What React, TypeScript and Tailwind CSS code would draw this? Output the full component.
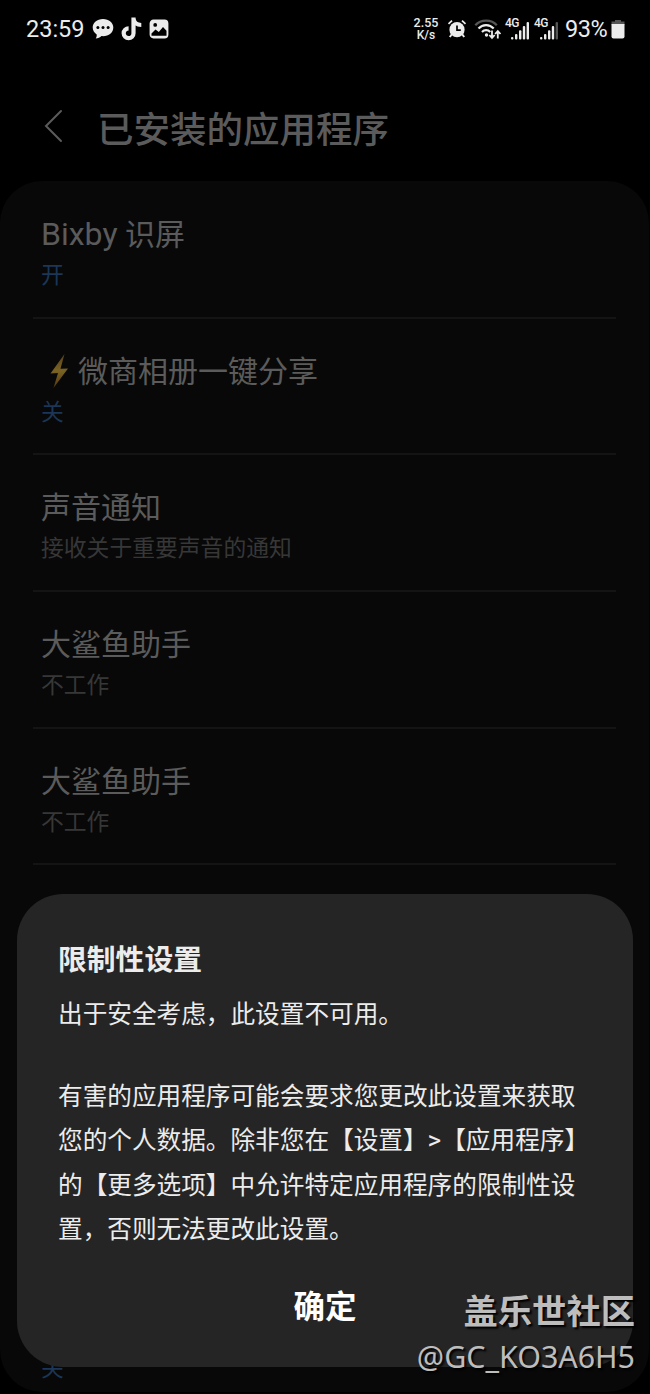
type Row = {
  title: string;
  sub: string;
  tone: "blue" | "gray";
  bolt?: boolean;
};

const rows: Row[] = [
  { title: "Bixby 识屏", sub: "开", tone: "blue" },
  { title: "微商相册一键分享", sub: "关", tone: "blue", bolt: true },
  { title: "声音通知", sub: "接收关于重要声音的通知", tone: "gray" },
  { title: "大鲨鱼助手", sub: "不工作", tone: "gray" },
  { title: "大鲨鱼助手", sub: "不工作", tone: "gray" },
];

function Signal({ weak }: { weak?: boolean }) {
  return (
    <div className="relative h-6 w-[24px]">
      <span className="absolute left-[-1px] top-0 text-[12px] font-medium leading-none tracking-[-0.5px]">4G</span>
      <svg viewBox="0 0 24 24" className="h-6 w-6" fill="#ececec">
        <rect x="5" y="20" width="2.4" height="2.5" rx="1" />
        <rect x="9" y="17" width="2.4" height="5.5" rx="1" />
        <rect x="13" y="13.2" width="2.4" height="9.3" rx="1" />
        <rect x="16.8" y="9" width="2.4" height="13.5" rx="1" />
        <rect x="20.6" y="5" width="2.4" height="17.5" rx="1" fill={weak ? "#555" : "#ececec"} />
      </svg>
    </div>
  );
}

function StatusBar() {
  return (
    <header className="flex h-[58px] items-center pl-[26px] pr-[25px] text-[#ececec]">
      <span className="w-[66px] pt-[2px] text-[23.5px] leading-none">23:59</span>

      {/* Notification icons */}
      <svg viewBox="0 0 22 22" className="h-[22px] w-[22px]">
        <path
          d="M11 1C5 1 .7 4.7.7 9.6c0 3 1.6 5.3 4 6.8.2 1.8-.3 3.1-1 4.2 2.3-.3 4.3-1.1 5.8-2.5.5.1 1 .1 1.5.1 6 0 10.3-3.7 10.3-8.6S17 1 11 1Z"
          fill="#ececec"
        />
        <circle cx="5.9" cy="9.6" r="1.5" fill="#000" />
        <circle cx="11" cy="9.6" r="1.5" fill="#000" />
        <circle cx="16.1" cy="9.6" r="1.5" fill="#000" />
      </svg>
      <svg viewBox="0 0 24 26" className="ml-[6px] h-[26px] w-[24px]">
        <path
          d="M13.5 1.5v15.8a4.9 4.9 0 1 1-4.9-4.9M13.5 2.5c.3 4 3.3 6.500 7.800 6.500"
          fill="none"
          stroke="#ececec"
          strokeWidth="4.2"
        />
      </svg>
      <svg viewBox="0 0 20 20" className="ml-[5px] h-5 w-5">
        <rect x="1.3" y="1.3" width="17.4" height="17.4" rx="3.2" fill="#ececec" stroke="#ececec" strokeWidth="1.4" />
        <path d="M2.5 14.5 6.5 10.5l3.3 2.5 4.2-5 3.5 3.8v5H2.5Z" fill="#000" />
        <circle cx="6.2" cy="5.9" r="1.9" fill="#000" />
      </svg>

      {/* System icons */}
      <div className="ml-auto flex items-center">
        <div className="w-[26px] text-center text-[12.5px] font-medium leading-none">
          <div className="h-3 leading-3">2.55</div>
          <div className="h-3 text-[12px] leading-3">K/s</div>
        </div>
        <svg viewBox="0 0 20 20" className="ml-[8px] h-5 w-5" fill="none">
          <path d="M1.5 4.8 5 1.7M18.5 4.8 15 1.7" stroke="#ececec" strokeWidth="1.8" />
          <circle cx="10" cy="10.7" r="7.6" fill="#ececec" />
          <path d="m5 15-2.2 3M15 15l2.2 3" stroke="#ececec" strokeWidth="2" />
          <path d="M10 6.5v4.7h3.8" stroke="#000" strokeWidth="1.7" />
        </svg>
        <svg viewBox="0 0 28 24" className="ml-[7px] h-6 w-7" fill="none" strokeWidth="2.2">
          <path d="M1.3 8.2C6.8 2 17.5 2 22.8 8.2" stroke="#555" />
          <path d="M4.5 11.5c4.2-4.6 11-4.6 15.2 0" stroke="#ececec" />
          <path d="M8 15c2.3-2.4 6-2.4 8.2 0" stroke="#ececec" />
          <circle cx="12.5" cy="18" r="1.7" fill="#ececec" />
          <path
            d="M18 13.5v7M15.3 18l2.7 2.9 2.7-2.9M23.8 21.5v-7M21.1 17l2.7-2.9 2.7 2.9"
            stroke="#ececec"
            strokeWidth="1.8"
          />
        </svg>
        <div className="ml-[4px] flex gap-[5px]">
          <Signal />
          <Signal weak />
        </div>
        <span className="ml-[6px] w-[46px] whitespace-nowrap pt-[2px] text-[23.5px] leading-none tracking-[-0.5px]">
          93%
        </span>
        <svg viewBox="0 0 14 20" className="h-5 w-[14px]">
          <path d="M4 1h6v1.5h3.5V6H.5V2.5H4Z" fill="#555" />
          <path d="M.5 5h13v12.5q0 2-2 2h-9q-2 0-2-2Z" fill="#ececec" />
        </svg>
      </div>
    </header>
  );
}

function Bolt() {
  return (
    <svg viewBox="0 0 20 36" className="ml-[8px] mr-[9px] h-9 w-5">
      <defs>
        <linearGradient id="bolt" x1="0" y1="0" x2="0" y2="1">
          <stop offset="0" stopColor="#594018" />
          <stop offset=".5" stopColor="#7a6424" />
          <stop offset="1" stopColor="#57350f" />
        </linearGradient>
      </defs>
      <path d="M15.5 1 1.5 20.5l7.5-.5L4.5 35 19 15.5l-7.5.3Z" fill="url(#bolt)" />
    </svg>
  );
}

function SettingRow({ row }: { row: Row }) {
  // Latin words are set slightly larger than the Chinese next to them
  const [, latin, rest] = row.title.match(/^([A-Za-z]*)(.*)$/) ?? ["", "", row.title];

  return (
    <div className="h-[136.7px] px-[33px]">
      <div className="h-full border-b-2 border-[#141414] pl-2 pt-[30px]">
        <div className="flex h-[45px] items-center whitespace-pre text-[30px] text-[#5b5b5b]">
          {row.bolt && <Bolt />}
          <span className="leading-[45px]">
            {latin && <span className="text-[32px]">{latin}</span>}
            {rest}
          </span>
        </div>
        <div
          className={`flex h-[38px] items-center text-[22.8px] ${
            row.tone === "blue" ? "text-[#1b3657]" : "text-[#373737]"
          }`}
        >
          {row.sub}
        </div>
      </div>
    </div>
  );
}

export default function App() {
  return (
    <div className="relative h-[1394px] w-[650px] overflow-hidden bg-black font-['Roboto','Noto_Sans_CJK_SC',sans-serif] [text-spacing-trim:space-all]">
      <StatusBar />

      {/* Page title */}
      <div className="flex h-[123px] items-center pl-[44px] pt-[24px]">
        <svg viewBox="0 0 20 34" className="mt-[-11px] h-[34px] w-5" fill="none">
          <path d="M17 2 2 17l15 15" stroke="#5b5b5b" strokeWidth="2" strokeLinecap="round" />
        </svg>
        <h1 className="ml-[33px] text-[36.5px] font-medium leading-none text-[#5b5b5b]">已安装的应用程序</h1>
      </div>

      {/* Installed apps */}
      <main className="mr-px flex h-[1211px] flex-col justify-between rounded-[42px] bg-[#080808]">
        <div className="pt-[1px]">
          {rows.map((row, i) => (
            <SettingRow key={i} row={row} />
          ))}
        </div>
        <div className="pb-[6px] pl-[41px] text-[22.8px] text-[#1b3657]">关</div>
      </main>

      {/* Restricted setting dialog */}
      <section
        role="dialog"
        className="absolute left-[17px] top-[894px] h-[473px] w-[616px] rounded-[46px] bg-[#252525] px-[41px] pt-[44px] text-[#ececec]"
      >
        <h2 className="text-[28.8px] font-bold leading-[44px]">限制性设置</h2>
        <p className="mt-[11px] text-[24.65px] leading-[44.5px]">出于安全考虑，此设置不可用。</p>
        <p className="mt-[37px] whitespace-nowrap text-[24.65px] leading-[44.5px]">
          有害的应用程序可能会要求您更改此设置来获取
          <br />
          您的个人数据。除非您在【设置】<span className="text-[26px] leading-none">&gt;</span>【应用程序】
          <br />
          的【更多选项】中允许特定应用程序的限制性设
          <br />
          置，否则无法更改此设置。
        </p>
        <button className="mt-[31px] block w-full text-center text-[31.5px] font-bold leading-[48px] text-white">
          确定
        </button>
      </section>

      {/* Community watermark */}
      <div className="absolute right-[15px] top-[1289px] whitespace-nowrap text-right text-[#bdbdbd] [text-shadow:2px_2px_2px_#000]">
        <div className="text-[34.3px] font-bold leading-[46px]">盖乐世社区</div>
        <div className="font-['Noto_Sans',sans-serif] text-[30.4px] leading-[44px]">@GC_KO3A6H5</div>
      </div>
    </div>
  );
}
